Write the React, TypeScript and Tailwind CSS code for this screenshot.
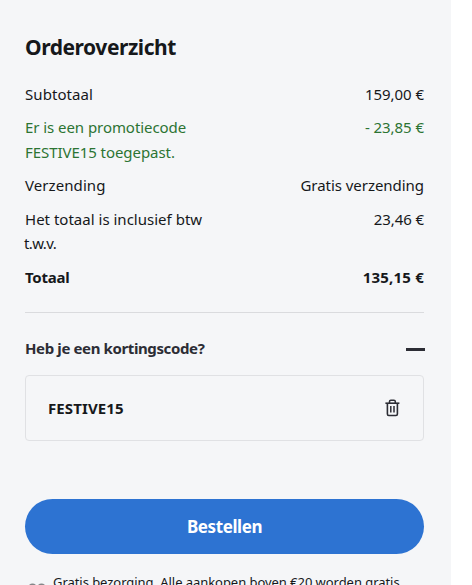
interface SummaryRow {
  label: string;
  value: string;
  className: string;
  labelClassName: string;
  valueClassName: string;
  note?: string;
}

const summaryRows: SummaryRow[] = [
  {
    label: "Subtotaal",
    value: "159,00 €",
    className: "text-[#16181b]",
    labelClassName: "tracking-[0.08px]",
    valueClassName: "tracking-[-0.05px]"
  },
  {
    label: "Er is een promotiecode FESTIVE15 toegepast.",
    value: "- 23,85 €",
    className: "text-[#2c7433]",
    labelClassName: "tracking-[-0.06px]",
    valueClassName: "tracking-[-0.05px]"
  },
  {
    label: "Verzending",
    value: "Gratis verzending",
    className: "text-[#16181b]",
    labelClassName: "tracking-[0.08px]",
    valueClassName: "tracking-[-0.04px]"
  },
  {
    label: "Het totaal is inclusief btw",
    note: "t.w.v.",
    value: "23,46 €",
    className: "text-[#16181b]",
    labelClassName: "tracking-[0.01px]",
    valueClassName: "tracking-[-0.08px]"
  },
  {
    label: "Totaal",
    value: "135,15 €",
    className: "font-bold text-[#16181b]",
    labelClassName: "tracking-[-0.25px]",
    valueClassName: "tracking-[0.2px]"
  }
];

function TrashIcon() {
  return (
    <svg width="16" height="18" viewBox="0 0 16 18" fill="none" stroke="#2c2d35">
      <path d="M1.4 4.2h14" strokeWidth="1.6" />
      <path d="M5.5 4V2.6Q5.5 1.2 6.9 1.2h3q1.4 0 1.4 1.4V4" strokeWidth="1.5" />
      <path d="M3.4 4.5v10.6q0 1.4 1.4 1.4h7.2q1.4 0 1.4-1.4V4.5" strokeWidth="1.6" />
      <path d="M6.8 7v6.5M10 7v6.5" strokeWidth="1.5" />
    </svg>
  );
}

export default function App() {
  return (
    <main className="h-[585px] w-[472px] overflow-hidden bg-white font-['Noto_Sans',sans-serif] text-[15px] text-[#16181b]">
      <div className="h-full w-[451px] bg-[#f5f6f8] pr-[27px] pl-[25px] pt-[31px]">
        <h1 className="text-[21px] leading-8 font-bold tracking-[-0.45px] whitespace-nowrap">
          Orderoverzicht
        </h1>

        <dl className="mt-[18.75px] flex flex-col gap-[9px] leading-[24.5px]">
          {summaryRows.map((row) => (
            <div key={row.label} className={`flex justify-between ${row.className}`}>
              <dt className={`w-[185px] ${row.labelClassName}`}>
                {row.label}
                {row.note ? (
                  <span className="-ml-px block tracking-[-0.6px]">{row.note}</span>
                ) : null}
              </dt>
              <dd className={`whitespace-nowrap ${row.valueClassName}`}>{row.value}</dd>
            </div>
          ))}
        </dl>

        <section className="mt-[22.75px] border-t border-[#dadbde] pt-[23px]">
          <button
            className="flex h-6 w-full items-center justify-between text-[#2c2d35]"
            type="button"
          >
            <span className="font-bold tracking-[-0.38px] whitespace-nowrap">
              Heb je een kortingscode?
            </span>
            <span className="-mr-px mt-[3px] h-[2.5px] w-[19px] bg-[#2c2d35]" />
          </button>
          <div className="mt-[15px] flex h-[66px] items-center justify-between rounded-[4px] border border-[#e0e1e4] pr-[23px] pl-[22px]">
            <span className="font-bold tracking-[0.1px]">FESTIVE15</span>
            <button type="button" aria-label="Verwijderen">
              <TrashIcon />
            </button>
          </div>
        </section>

        <button
          className="mt-[58px] h-[55px] w-full rounded-full bg-[#2d73d2] text-[17px] font-bold tracking-[-0.4px] text-white"
          type="button"
        >
          Bestellen
        </button>

        <div className="mt-[18px] flex whitespace-nowrap">
          <svg className="mt-[11px] ml-[3px] shrink-0" width="18" height="12" viewBox="0 0 18 12" fill="none" stroke="#858689" strokeWidth="2">
            <circle cx="4.5" cy="5" r="3.5" />
            <circle cx="13.5" cy="5" r="3.5" />
          </svg>
          <p className="ml-[7px] text-[13px] leading-5 tracking-[-0.05px]">
            Gratis bezorging. Alle aankopen boven €20 worden gratis
          </p>
        </div>
      </div>
    </main>
  );
}
